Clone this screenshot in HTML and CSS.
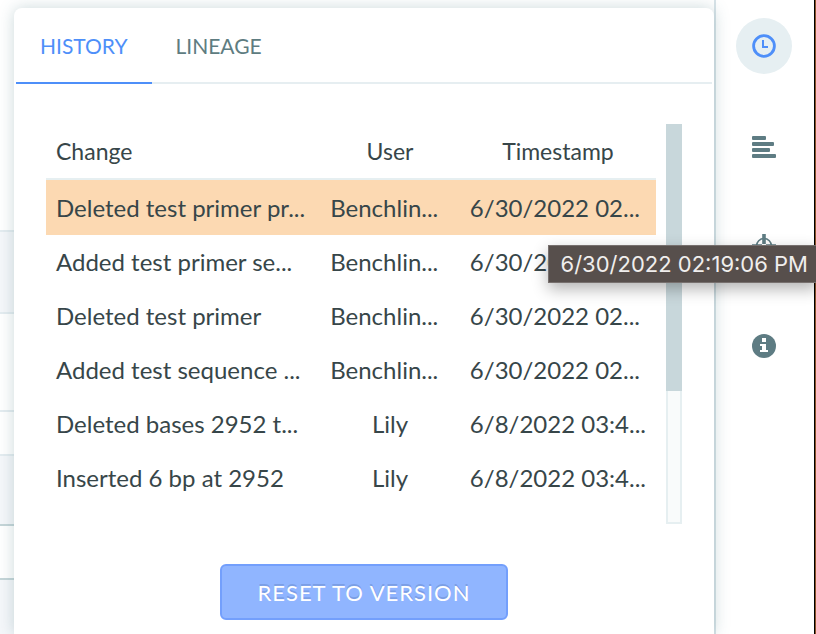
FILE: index.html
```html
<!DOCTYPE html>
<html lang="en">
<head>
  <meta charset="UTF-8">
  <meta name="viewport" content="width=device-width, initial-scale=1">
  <title>Sequence History</title>
  <link rel="stylesheet" href="styles.css">
</head>
<body>

  <!-- Edge of the sheet behind the panel -->
  <div class="sheet">
    <div class="band band-top"></div>
    <div class="band band-large shaded"></div>
    <div class="band band-tall"></div>
    <div class="band band-short"></div>
    <div class="band band-medium shaded strong"></div>
    <div class="band band-row strong"></div>
    <div class="band band-rest shaded"></div>
  </div>

  <main class="panel">
    <nav class="tabs">
      <a href="#history" class="tab active">HISTORY</a>
      <a href="#lineage" class="tab">LINEAGE</a>
    </nav>

    <div class="history" id="history">
      <table>
        <thead>
          <tr><th class="change">Change</th><th class="user">User</th><th class="time">Timestamp</th></tr>
        </thead>
        <tbody>
          <tr class="selected"><td>Deleted test primer pr...</td><td>Benchlin...</td><td>6/30/2022 02...</td></tr>
          <tr><td>Added test primer se...</td><td>Benchlin...</td><td>6/30/2022 02...</td></tr>
          <tr><td>Deleted test primer</td><td>Benchlin...</td><td>6/30/2022 02...</td></tr>
          <tr><td>Added test sequence ...</td><td>Benchlin...</td><td>6/30/2022 02...</td></tr>
          <tr><td>Deleted bases 2952 t...</td><td class="short">Lily</td><td>6/8/2022 03:4...</td></tr>
          <tr><td>Inserted 6 bp at 2952</td><td class="short">Lily</td><td>6/8/2022 03:4...</td></tr>
        </tbody>
      </table>
      <div class="scrollbar"><div class="thumb"></div></div>
    </div>

    <button type="button" class="reset-btn">RESET TO VERSION</button>
  </main>

  <aside class="rail">
    <button type="button" class="rail-btn active" aria-label="History">
      <svg width="24" height="24" viewBox="0 0 24 24" fill="none" stroke="currentColor">
        <circle cx="12" cy="12" r="10.4" stroke-width="2.8"/>
        <path d="M11 6v7h5" stroke-width="2"/>
      </svg>
    </button>
    <button type="button" class="rail-btn" aria-label="Description">
      <svg width="24" height="24" viewBox="0 0 24 24" fill="currentColor">
        <rect x="0" y="2" width="14" height="4" rx="1"/>
        <rect x="0" y="8" width="22" height="4" rx="1"/>
        <rect x="0" y="14" width="18" height="4" rx="1"/>
        <rect x="0" y="20" width="24" height="4" rx="1"/>
      </svg>
    </button>
    <button type="button" class="rail-btn" aria-label="Target">
      <svg width="24" height="24" viewBox="0 0 24 24" fill="none" stroke="currentColor">
        <circle cx="12" cy="12" r="7.5" stroke-width="1.6"/>
        <path d="M12 0v10M12 14v10M0 12h10M14 12h10" stroke-width="3.6"/>
      </svg>
    </button>
    <button type="button" class="rail-btn" aria-label="Information">
      <svg width="24" height="24" viewBox="0 0 24 24">
        <circle cx="12" cy="12" r="12" fill="currentColor"/>
        <path d="M10 4h4v4h-4zM8 10h6v6h2v2H8v-2h2v-4H8z" fill="#fff"/>
      </svg>
    </button>
  </aside>

  <div class="tooltip" role="tooltip">6/30/2022 02:19:06 PM</div>

</body>
</html>
```
FILE: styles.css
```css
* {
  box-sizing: border-box;
}

body {
  margin: 0;
  min-height: 100vh;
  display: flex;
  position: relative;
  overflow: hidden;
  background: #fff;
  color: #374649;
  font-family: Lato, "Open Sans", sans-serif;
  font-size: 24px;
  line-height: 28px;
}

.sheet {
  width: 14px;
  flex-shrink: 0;
  display: flex;
  flex-direction: column;
}

.band {
  border-bottom: 2px solid #e4ecf0;
}

.band-top {
  height: 232px;
}

.band-large {
  height: 82px;
}

.band-tall {
  height: 98px;
}

.band-short {
  height: 44px;
}

.band-medium {
  height: 70px;
}

.band-row {
  height: 54px;
}

.band-rest {
  flex: 1;
  border-bottom: none;
}

.shaded {
  background: #f5f7fa;
}

.strong {
  border-color: #c5d5d8;
}

.panel {
  position: relative;
  flex: 1;
  min-width: 0;
  margin-top: 8px;
  padding: 0 2px;
  background: #fff;
  border-radius: 8px 8px 0 0;
  box-shadow: 0 0 16px rgba(70, 120, 125, 0.28);
}

.tabs {
  display: flex;
  border-bottom: 2px solid #e6eef1;
}

.tab {
  padding: 24px 24px 22px;
  margin-bottom: -2px;
  border-bottom: 2px solid transparent;
  color: #5e7c81;
  font-size: 21px;
  text-decoration: none;
}

.tab.active {
  color: #4e8ff9;
  border-color: #4e8ff9;
}

.history {
  display: flex;
  gap: 10px;
  margin: 40px 30px;
}

table {
  flex: 1;
  align-self: flex-start;
  table-layout: fixed;
  border-collapse: separate;
  border-spacing: 0;
}

th {
  height: 56px;
  padding: 0 10px;
  border-bottom: 2px solid #e6eff1;
  font-size: 23px;
  font-weight: normal;
}

td {
  height: 54px;
  padding: 0 10px;
  white-space: nowrap;
}

.change {
  width: 45%;
  text-align: left;
}

.user {
  width: 23%;
}

.time {
  width: 32%;
}

td.short {
  text-align: center;
}

.selected td {
  height: 55px;
  background: #fcd9b2;
}

.scrollbar {
  width: 16px;
  height: 400px;
  border: 2px solid #e6eff1;
  background: #f9fbfb;
}

.thumb {
  width: 16px;
  height: 267px;
  margin: -2px;
  background: #c8d7db;
}

.reset-btn {
  display: block;
  width: 288px;
  height: 56px;
  margin: 0 auto;
  border: 2px solid #739ffc;
  border-radius: 6px;
  background: #90b5ff;
  color: #fff;
  font-family: inherit;
  font-size: 22px;
  letter-spacing: 1px;
  text-shadow: 0 -2px rgba(60, 90, 150, 0.25);
  cursor: pointer;
}

.rail {
  width: 102px;
  flex-shrink: 0;
  display: flex;
  flex-direction: column;
  align-items: center;
  gap: 44px;
  padding: 18px 3px 0 0;
  border-left: 2px solid #d8e3e8;
  border-right: 1px solid #8a5228;
  box-shadow: inset -1px 0 #000;
}

.rail-btn {
  width: 56px;
  height: 56px;
  padding: 0;
  display: flex;
  align-items: center;
  justify-content: center;
  border: none;
  border-radius: 50%;
  background: none;
  color: #5e7c83;
  cursor: pointer;
}

.rail-btn.active {
  background: #e6eff2;
  color: #4e8ff9;
}

.tooltip {
  position: absolute;
  top: 245px;
  right: -2px;
  padding: 4px 9px 4px 12px;
  border: 1px solid #77706e;
  background: #574f4c;
  color: #f0eeed;
  box-shadow: 0 6px 16px rgba(0, 0, 0, 0.3);
  font-family: Inter, sans-serif;
  font-size: 22px;
  white-space: nowrap;
}
```
